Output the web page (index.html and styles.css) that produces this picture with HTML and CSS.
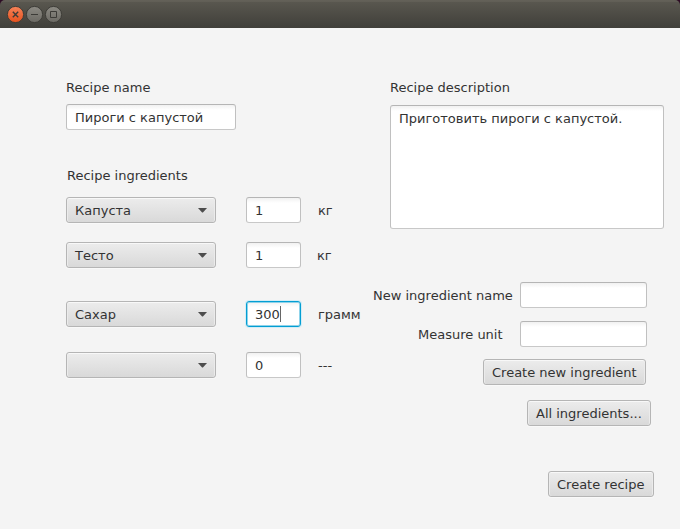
FILE: index.html
```html
<!DOCTYPE html>
<html lang="en">
<head>
<meta charset="utf-8">
<title>Recipe</title>
<link rel="stylesheet" href="styles.css">
</head>
<body>
<header class="titlebar">
  <svg class="controls" width="60" height="28" viewBox="0 0 60 28" aria-hidden="true">
    <defs>
      <linearGradient id="close" x1="0" y1="0" x2="0" y2="1"><stop offset="0" stop-color="#f58359"/><stop offset="1" stop-color="#e6511d"/></linearGradient>
      <linearGradient id="plain" x1="0" y1="0" x2="0" y2="1"><stop offset="0" stop-color="#8c8a83"/><stop offset="1" stop-color="#6b6963"/></linearGradient>
    </defs>
    <g stroke="#3d3c37" stroke-width="1">
      <circle cx="9.5" cy="14.5" r="8.1" fill="url(#close)"/>
      <circle cx="28.5" cy="14.5" r="8.1" fill="url(#plain)"/>
      <circle cx="47.5" cy="14.5" r="8.1" fill="url(#plain)"/>
    </g>
    <g fill="none" stroke="#3c3b37" stroke-width="1">
      <path stroke-width="1.4" d="M6.8 11.8l5.4 5.4M12.2 11.8l-5.4 5.4"/>
      <path d="M25 14.5h7"/>
      <path d="M44.5 11.5h6v6h-6z"/>
    </g>
  </svg>
</header>
<main class="content">
  <section class="left">
    <div class="label">Recipe name</div>
    <div class="field name">Пироги с капустой</div>
    <div class="label heading">Recipe ingredients</div>
    <div class="row"><div class="combo">Капуста<i class="arrow"></i></div><div class="field amount">1</div><span class="label">кг</span></div>
    <div class="row second"><div class="combo">Тесто<i class="arrow"></i></div><div class="field amount">1</div><span class="label unit-near">кг</span></div>
    <div class="row third"><div class="combo">Сахар<i class="arrow"></i></div><div class="field amount focused">300<i class="caret"></i></div><span class="label">грамм</span></div>
    <div class="row fourth"><div class="combo"><i class="arrow"></i></div><div class="field amount">0</div><span class="label">---</span></div>
  </section>
  <section class="right">
    <div class="label description-label">Recipe description</div>
    <div class="field description">Приготовить пироги с капустой.</div>
    <div class="form-row"><span class="label new-name">New ingredient name</span><div class="field entry"></div></div>
    <div class="form-row measure"><span class="label unit-label">Measure unit</span><div class="field entry"></div></div>
    <div class="button create-ingredient">Create new ingredient</div>
    <div class="button all-ingredients">All ingredients...</div>
    <div class="button create-recipe">Create recipe</div>
  </section>
</main>
</body>
</html>
```

FILE: styles.css
```css
* { box-sizing: border-box; }
html { background: linear-gradient(#2c0c24, #2c0c24) 0 0 / 100% 5px no-repeat #f4f4f4; }
body {
  margin: 0;
  width: 680px;
  height: 529px;
  overflow: hidden;
  color: #333;
  font: 13px/15px "DejaVu Sans", sans-serif;
}
.titlebar {
  height: 28px;
  padding-left: 6px;
  background: linear-gradient(#5c5a52 0, #6a675e 1px, #59574f 2px, #403f3a 28px);
  border-top-left-radius: 5px;
  border-top-right-radius: 5px;
}
.controls { display: block; }
.content { display: flex; height: 501px; }
.left { width: 366px; padding: 52px 0 0 66px; }
.right {
  width: 314px;
  padding-top: 52px;
  display: flex;
  flex-direction: column;
}
.label { height: 15px; white-space: pre; }
.field, .combo, .button {
  height: 26px;
  border: 1px solid #b5b5b5;
  border-radius: 3px;
  padding: 5px 8px;
  white-space: pre;
}
.field {
  background: linear-gradient(#f1f1f1 0, #fff 5px);
  border-color: #b5b5b5 #c0c0c0 #c8c8c8;
}
.combo, .button {
  background: linear-gradient(#ececec, #d9d9d9);
  box-shadow: inset 0 1px #f8f8f8, inset 1px 0 #ebebeb, inset -1px 0 #ebebeb, 0 1px #f9f9f9;
}
.name { width: 170px; margin-top: 9px; }
.heading { margin: 38px 0 14px 1px; }
.row { display: flex; align-items: center; height: 26px; }
.second { margin-top: 19px; }
.third { margin-top: 33px; }
.fourth { margin-top: 25px; }
.combo {
  width: 150px;
  display: flex;
  align-items: center;
  margin-right: 30px;
}
.arrow {
  width: 9px;
  height: 5px;
  margin-left: auto;
  background: #4d4d4d;
  clip-path: polygon(0 0, 100% 0, 100% 10%, 55% 100%, 45% 100%, 0 10%);
}
.amount { width: 55px; margin-right: 17px; display: flex; }
.unit-near { margin-left: -1px; }
.focused {
  border-color: #039ed3;
  box-shadow: inset 0 0 0 1px #8fd3ea, 0 0 0 1px #d3edf6;
}
.caret { width: 1px; height: 16px; margin-top: -1px; background: #666; }
.description-label { margin-left: 24px; }
.description { width: 274px; height: 124px; margin: 10px 0 53px 24px; }
.form-row { display: flex; align-items: center; height: 26px; }
.form-row .label { flex: none; }
.new-name { width: 147px; padding-left: 7px; }
.unit-label { width: 95px; margin-left: 52px; }
.entry { width: 127px; margin-left: auto; margin-right: 33px; }
.measure { margin-top: 13px; }
.create-ingredient { width: 163px; margin: 12px 0 0 117px; }
.all-ingredients { width: 124px; margin: 15px 0 0 161px; }
.create-recipe { width: 106px; margin: 45px 0 0 182px; }
```
